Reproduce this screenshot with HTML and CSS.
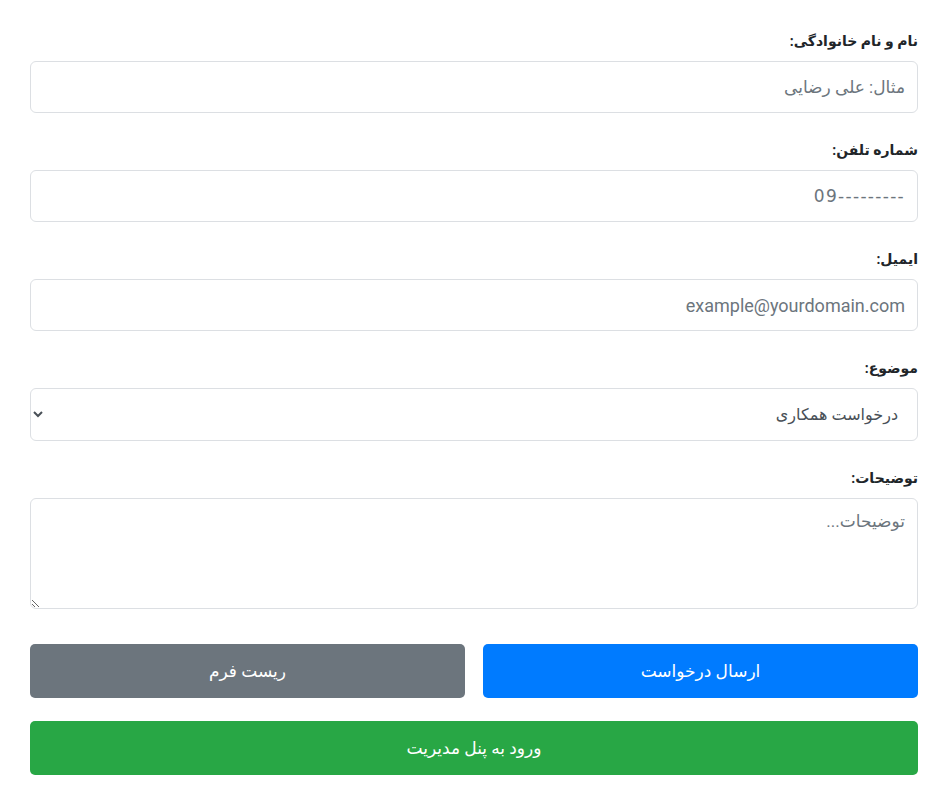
FILE: index.html
```html
<!DOCTYPE html>
<html lang="fa" dir="rtl">
<head>
<meta charset="utf-8">
<title>فرم</title>
<link rel="stylesheet" href="styles.css">
</head>
<body>
<form class="form">
  <div class="group">
    <label class="label" for="name">نام و نام خانوادگی:</label>
    <input class="control" id="name" type="text" placeholder="مثال: علی رضایی">
  </div>
  <div class="group">
    <label class="label" for="phone">شماره تلفن:</label>
    <input class="control phone" id="phone" type="tel" placeholder="09---------">
  </div>
  <div class="group">
    <label class="label" for="email">ایمیل:</label>
    <input class="control latin" id="email" type="email" placeholder="example@yourdomain.com">
  </div>
  <div class="group">
    <label class="label" for="subject">موضوع:</label>
    <select class="control select" id="subject">
      <option>درخواست همکاری</option>
    </select>
  </div>
  <div class="group">
    <label class="label" for="desc">توضیحات:</label>
    <textarea class="control area" id="desc" placeholder="توضیحات..."></textarea>
  </div>
  <div class="actions">
    <button type="submit" class="btn btn-primary">ارسال درخواست</button>
    <button type="reset" class="btn btn-secondary">ریست فرم</button>
  </div>
  <button type="button" class="btn btn-success btn-block">ورود به پنل مدیریت</button>
</form>
</body>
</html>
```
FILE: styles.css
```css
html, body {
  margin: 0;
  padding: 0;
  background: #ffffff;
}
body {
  font-family: Roboto, "DejaVu Sans", sans-serif;
  color: #212529;
  font-size: 16px;
}
.form {
  padding: 29px 30px 0 30px;
  display: flex;
  flex-direction: column;
}
.group {
  display: flex;
  flex-direction: column;
  margin-bottom: 25px;
}
.label {
  font-weight: bold;
  font-size: 14px;
  line-height: 24px;
  margin-bottom: 8px;
  color: #212529;
}
.control {
  box-sizing: border-box;
  height: 52px;
  width: 100%;
  border: 1px solid #dcdfe3;
  border-radius: 6px;
  padding: 0 12px;
  font-family: Roboto, "DejaVu Sans", sans-serif;
  font-size: 17px;
  color: #495057;
  background: #fff;
  margin: 0;
  text-align: right;
}
.control::placeholder {
  color: #6c757d;
  opacity: 1;
}
.phone {
  direction: ltr;
  text-align: right;
  font-family: "DejaVu Sans", sans-serif;
  font-size: 17px;
  letter-spacing: 1.3px;
}
.latin {
  font-size: 18px;
}
.select {
  height: 53px;
  padding: 0 15px 0 8px;
  font-size: 16px;
  color: #495057;
}
.area {
  height: 111px;
  padding: 12px 12px;
  resize: vertical;
}
.actions {
  display: grid;
  grid-template-columns: 1fr 1fr;
  gap: 18px;
  margin-top: 10px;
  margin-bottom: 23px;
}
.btn {
  box-sizing: border-box;
  height: 54px;
  border: none;
  border-radius: 5px;
  color: #ffffff;
  font-family: Roboto, "DejaVu Sans", sans-serif;
  font-size: 17px;
  cursor: pointer;
  margin: 0;
}
.btn-primary { background: #007bff; }
.btn-secondary { background: #6c757d; }
.btn-success { background: #28a745; }
.btn-block { width: 100%; }
```
